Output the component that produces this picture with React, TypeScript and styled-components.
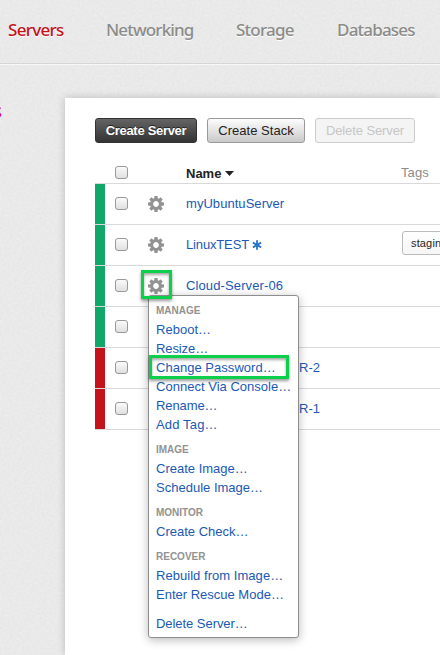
import React from "react";
import styled, { createGlobalStyle, css } from "styled-components";

const noise =
  "data:image/svg+xml," +
  encodeURIComponent(
    '<svg xmlns="http://www.w3.org/2000/svg" width="200" height="200"><filter id="n" color-interpolation-filters="sRGB"><feTurbulence type="fractalNoise" baseFrequency="0.4" numOctaves="3" stitchTiles="stitch"/><feColorMatrix values="0.04 0 0 0 0.895  0.04 0 0 0 0.895  0.04 0 0 0 0.895  0 0 0 0 1"/></filter><rect width="200" height="200" filter="url(#n)"/></svg>'
  );

const GlobalStyle = createGlobalStyle`
  * { box-sizing: border-box; }
  body {
    margin: 0;
    overflow: hidden;
    background: #e9e9e9;
    font: 13px/19px "Liberation Sans", Arial, sans-serif;
  }
`;

const Page = styled.div`
  position: relative;
  width: 440px;
  height: 655px;
  overflow: hidden;
  background: #e9e9e9 url("${noise}");
`;

const Nav = styled.nav`
  display: flex;
  height: 64px;
  border-bottom: 1px solid #d6d6d6;
  box-shadow: 0 1px 0 #f8f8f8;
  padding: 17px 0 0 8px;
`;

const NavItem = styled.a<{ $width: number; $spacing: number; $active?: boolean }>`
  flex: none;
  width: ${(p) => p.$width}px;
  font: 500 17px/26px "Noto Sans", "Open Sans", sans-serif;
  letter-spacing: ${(p) => p.$spacing}px;
  white-space: nowrap;
  color: ${(p) => (p.$active ? "#c4121a" : "#8b8b88")};
  text-shadow: 0 1px 0 #fff;
`;

const Body = styled.div`
  display: flex;
  height: 591px;
`;

const Side = styled.aside`
  flex: none;
  width: 65px;
  padding-top: 35px;
  overflow: hidden;
`;

const SideTitle = styled.div`
  width: 2px;
  display: flex;
  justify-content: flex-end;
  overflow: hidden;
  font: 20px/24px "Noto Sans", sans-serif;
  color: #c4128a;
`;

const Panel = styled.main`
  flex: none;
  width: 375px;
  margin-top: 34px;
  padding: 20px 0 0 30px;
  background: #fff;
  box-shadow: 0 0 8px rgba(0, 0, 0, 0.2);
`;

const Toolbar = styled.div`
  display: flex;
  gap: 10px;
  height: 45px;
`;

const variants = {
  dark: css`
    background: linear-gradient(#646464, #333);
    border-color: #333;
    color: #fff;
    font-weight: bold;
    text-shadow: 0 -1px 0 #222;
  `,
  light: css`
    background: linear-gradient(#fdfdfd, #c9c9c9);
    border-color: #999;
    color: #222;
  `,
  disabled: css`
    background: #f4f4f4;
    border-color: #ccc;
    color: #c6c6c6;
  `,
};

const Button = styled.button<{ $kind: keyof typeof variants; $width: number; $spacing: number }>`
  width: ${(p) => p.$width}px;
  height: 25px;
  padding: 0;
  border: 1px solid;
  border-radius: 3px;
  font: 13px/23px "Liberation Sans", Arial, sans-serif;
  letter-spacing: ${(p) => p.$spacing}px;
  white-space: nowrap;
  ${(p) => variants[p.$kind]}
`;

const rowGrid = css`
  display: grid;
  grid-template-columns: 20px 33px 38px 215px 1fr;
  align-items: center;
`;

const HeaderRow = styled.div`
  ${rowGrid}
  height: 21px;
  padding-bottom: 2px;
  border-bottom: 1px solid #d9d9d9;
  line-height: 17px;
`;

const Row = styled.div<{ $status: string }>`
  ${rowGrid}
  height: 41px;
  padding-bottom: 1px;
  border-bottom: 1px solid #d9d9d9;
  background: linear-gradient(${(p) => p.$status}, ${(p) => p.$status}) no-repeat 0 0 / 10px 100%;
`;

const Check = styled.span`
  grid-column: 2;
  width: 13px;
  height: 13px;
  border: 1px solid #999;
  border-radius: 3px;
  background: linear-gradient(#fafafa, #e0e0e0);
`;

const Name = styled.a<{ $spacing?: number; $offset?: number }>`
  grid-column: 4;
  display: flex;
  align-items: center;
  gap: 3px;
  color: #2059b5;
  padding-left: ${(p) => p.$offset ?? 0}px;
  letter-spacing: ${(p) => p.$spacing ?? 0}px;
  white-space: nowrap;
`;

const NameHead = styled.b`
  grid-column: 4;
  display: flex;
  align-items: center;
  gap: 4px;
  margin-bottom: -2px;
  color: #222;
`;

const TagsHead = styled.span`
  grid-column: 5;
  color: #8c8c8c;
  letter-spacing: 0.1px;
`;

const Tag = styled.span`
  grid-column: 5;
  display: block;
  width: 60px;
  height: 24px;
  margin: -3px 0 0 1px;
  padding-left: 8px;
  border: 1px solid #bbb;
  border-radius: 3px;
  background: linear-gradient(#fff, #f6f6f6);
  font-size: 11px;
  line-height: 22px;
  letter-spacing: 0.15px;
  color: #222;
`;

const Icon = styled.svg`
  display: block;
  flex: none;
`;

const Menu = styled.div`
  position: absolute;
  left: 148px;
  top: 295px;
  width: 151px;
  height: 343px;
  padding: 5px 0 0 7px;
  border: 1px solid #8e8e8e;
  border-radius: 3px;
  background: #fff;
  box-shadow: 0 2px 10px rgba(0, 0, 0, 0.28);
`;

const Group = styled.div`
  margin-bottom: 6px;

  &:last-of-type {
    margin-bottom: 10px;
  }
`;

const GroupTitle = styled.div`
  height: 19px;
  font: bold 10px/19px "Liberation Sans", Arial, sans-serif;
  color: #929292;
`;

const MenuItem = styled.a<{ $spacing: number }>`
  display: block;
  height: 19px;
  color: #2059b5;
  letter-spacing: ${(p) => p.$spacing}px;
  white-space: nowrap;
`;

const Highlight = styled.div<{ $x: number; $y: number; $w: number; $h: number }>`
  position: absolute;
  left: ${(p) => p.$x}px;
  top: ${(p) => p.$y}px;
  width: ${(p) => p.$w}px;
  height: ${(p) => p.$h}px;
  border: 3px solid #0ccf4b;
  box-shadow: 0 2px 3px rgba(0, 0, 0, 0.4), inset 0 2px 3px rgba(0, 0, 0, 0.35);
`;

const Gear = () => (
  <Icon width="16" height="16" viewBox="-8 -8 16 16">
    <circle r="4.4" fill="none" stroke="#929292" strokeWidth="3" />
    {[0, 45, 90, 135, 180, 225, 270, 315].map((a) => (
      <path key={a} d="M-1.8 -5L-1.5 -8H1.5L1.8 -5Z" fill="#929292" transform={`rotate(${a})`} />
    ))}
  </Icon>
);

const Asterisk = () => (
  <Icon width="10" height="10" viewBox="-5 -5 10 10">
    <path d="M0 -4.7V4.7M-4.1 -2.4L4.1 2.4M-4.1 2.4L4.1 -2.4" stroke="#2774cb" strokeWidth="1.8" />
  </Icon>
);

const GREEN = "#10a768";
const RED = "#c4131a";

type Server = { name?: string; spacing?: number; offset?: number; status: string; starred?: boolean; tag?: string };

const servers: Server[] = [
  { name: "myUbuntuServer", spacing: 0.05, status: GREEN },
  { name: "LinuxTEST", spacing: -0.15, status: GREEN, starred: true, tag: "staging" },
  { name: "Cloud-Server-06", spacing: 0.12, status: GREEN },
  { status: GREEN },
  { name: "R-2", offset: 113, status: RED },
  { name: "R-1", offset: 113, status: RED },
];

const groups: { title: string; items: [string, number][] }[] = [
  {
    title: "MANAGE",
    items: [
      ["Reboot…", 0.03],
      ["Resize…", -0.1],
      ["Change Password…", 0.03],
      ["Connect Via Console…", 0.02],
      ["Rename…", -0.1],
      ["Add Tag…", 0.15],
    ],
  },
  { title: "IMAGE", items: [["Create Image…", 0], ["Schedule Image…", 0.01]] },
  { title: "MONITOR", items: [["Create Check…", 0]] },
  { title: "RECOVER", items: [["Rebuild from Image…", 0.04], ["Enter Rescue Mode…", 0]] },
];

export default function App() {
  return (
    <>
      <GlobalStyle />
      <Page>
        <Nav>
          <NavItem $width={98} $spacing={-0.7} $active>Servers</NavItem>
          <NavItem $width={130} $spacing={-0.85}>Networking</NavItem>
          <NavItem $width={101} $spacing={-0.75}>Storage</NavItem>
          <NavItem $width={90} $spacing={-0.8}>Databases</NavItem>
        </Nav>
        <Body>
          <Side>
            <SideTitle>s</SideTitle>
          </Side>
          <Panel>
            <Toolbar>
              <Button $kind="dark" $width={102} $spacing={-0.3}>Create Server</Button>
              <Button $kind="light" $width={98} $spacing={0.02}>Create Stack</Button>
              <Button $kind="disabled" $width={100} $spacing={-0.1} disabled>Delete Server</Button>
            </Toolbar>
            <HeaderRow>
              <Check />
              <NameHead>
                Name
                <Icon width="9" height="5" viewBox="0 0 9 5">
                  <path d="M0 0H9L4.5 5Z" fill="#222" />
                </Icon>
              </NameHead>
              <TagsHead>Tags</TagsHead>
            </HeaderRow>
            {servers.map((s, i) => (
              <Row key={i} $status={s.status}>
                <Check />
                <Gear />
                <Name $spacing={s.spacing} $offset={s.offset}>
                  {s.name}
                  {s.starred && <Asterisk />}
                </Name>
                {s.tag && <Tag>{s.tag}</Tag>}
              </Row>
            ))}
          </Panel>
        </Body>
        <Menu>
          {groups.map((g) => (
            <Group key={g.title}>
              <GroupTitle>{g.title}</GroupTitle>
              {g.items.map(([label, spacing]) => (
                <MenuItem key={label} $spacing={spacing}>{label}</MenuItem>
              ))}
            </Group>
          ))}
          <MenuItem $spacing={-0.05}>Delete Server…</MenuItem>
        </Menu>
        <Highlight $x={141} $y={270} $w={31} $h={29} />
        <Highlight $x={149} $y={355} $w={140} $h={24} />
      </Page>
    </>
  );
}
